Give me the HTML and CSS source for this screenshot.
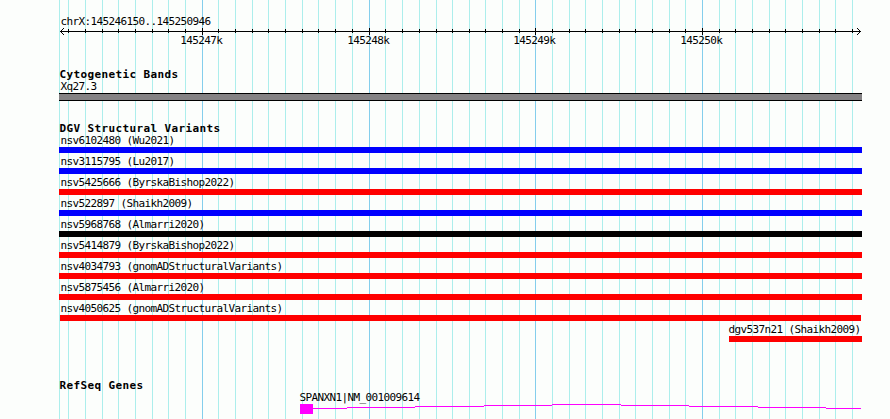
FILE: index.html
```html
<!DOCTYPE html>
<html lang="en">
<head>
<meta charset="utf-8">
<title>chrX:145246150..145250946</title>
<link rel="stylesheet" href="styles.css">
</head>
<body>
<main class="browser">
  <svg class="grid" width="890" height="419" shape-rendering="crispEdges" aria-hidden="true">
    <path class="minor" d="M59.5 0V419M68.5 0V419M85.5 0V419M102.5 0V419M118.5 0V419M135.5 0V419M152.5 0V419M168.5 0V419M185.5 0V419M218.5 0V419M235.5 0V419M252.5 0V419M268.5 0V419M285.5 0V419M302.5 0V419M318.5 0V419M335.5 0V419M352.5 0V419M385.5 0V419M402.5 0V419M419.5 0V419M436.5 0V419M452.5 0V419M469.5 0V419M485.5 0V419M502.5 0V419M519.5 0V419M552.5 0V419M569.5 0V419M585.5 0V419M602.5 0V419M619.5 0V419M635.5 0V419M652.5 0V419M669.5 0V419M685.5 0V419M719.5 0V419M735.5 0V419M752.5 0V419M769.5 0V419M785.5 0V419M802.5 0V419M819.5 0V419M835.5 0V419M852.5 0V419"/>
    <path class="major" d="M202.5 0V419M369.5 0V419M535.5 0V419M702.5 0V419"/>
  </svg>

  <section class="ruler">
    <div class="label">chrX:145246150..145250946</div>
    <svg class="axis" width="803" height="7" viewBox="59 28 803 7" shape-rendering="crispEdges" aria-hidden="true">
      <path d="M60 31.5H861"/>
      <path d="M68.5 29V33M85.5 29V33M102.5 29V33M118.5 29V33M135.5 29V33M152.5 29V33M168.5 29V33M185.5 29V33M218.5 29V33M235.5 29V33M252.5 29V33M268.5 29V33M285.5 29V33M302.5 29V33M318.5 29V33M335.5 29V33M352.5 29V33M385.5 29V33M402.5 29V33M419.5 29V33M436.5 29V33M452.5 29V33M469.5 29V33M485.5 29V33M502.5 29V33M519.5 29V33M552.5 29V33M569.5 29V33M585.5 29V33M602.5 29V33M619.5 29V33M635.5 29V33M652.5 29V33M669.5 29V33M685.5 29V33M719.5 29V33M735.5 29V33M752.5 29V33M769.5 29V33M785.5 29V33M802.5 29V33M819.5 29V33M835.5 29V33M852.5 29V33"/>
      <path d="M202.5 28V35M369.5 28V35M535.5 28V35M702.5 28V35"/>
      <path d="M61 30.5h1M62 29.5h1M63 28.5h1M61 32.5h1M62 33.5h1M63 34.5h1M859 30.5h1M858 29.5h1M857 28.5h1M859 32.5h1M858 33.5h1M857 34.5h1"/>
    </svg>
    <div class="scale">
      <span>145247k</span><span>145248k</span><span>145249k</span><span>145250k</span>
    </div>
  </section>

  <section class="track bands">
    <h2>Cytogenetic Bands</h2>
    <div class="label">Xq27.3</div>
    <div class="band"></div>
  </section>

  <section class="track variants">
    <h2>DGV Structural Variants</h2>
    <div class="variant gain"><div class="label">nsv6102480 (Wu2021)</div><div class="bar"></div></div>
    <div class="variant gain"><div class="label">nsv3115795 (Lu2017)</div><div class="bar"></div></div>
    <div class="variant loss"><div class="label">nsv5425666 (ByrskaBishop2022)</div><div class="bar"></div></div>
    <div class="variant gain"><div class="label">nsv522897 (Shaikh2009)</div><div class="bar"></div></div>
    <div class="variant other"><div class="label">nsv5968768 (Almarri2020)</div><div class="bar"></div></div>
    <div class="variant loss"><div class="label">nsv5414879 (ByrskaBishop2022)</div><div class="bar"></div></div>
    <div class="variant loss"><div class="label">nsv4034793 (gnomADStructuralVariants)</div><div class="bar"></div></div>
    <div class="variant loss"><div class="label">nsv5875456 (Almarri2020)</div><div class="bar"></div></div>
    <div class="variant loss inset"><div class="label">nsv4050625 (gnomADStructuralVariants)</div><div class="bar"></div></div>
    <div class="variant loss partial"><div class="label">dgv537n21 (Shaikh2009)</div><div class="bar"></div></div>
  </section>

  <section class="track genes">
    <h2>RefSeq Genes</h2>
    <div class="gene">
      <div class="label">SPANXN1|NM_001009614</div>
      <svg width="562" height="10" viewBox="300 404 562 10" shape-rendering="crispEdges" aria-hidden="true">
        <rect class="exon" x="300" y="404" width="13" height="10"/>
        <path class="intron" d="M313 408.5H347M347 407.5H415M415 406.5H484M484 405.5H552M552 404.5H621M621 405.5H689M689 406.5H758M758 407.5H826M826 408.5H861"/>
      </svg>
    </div>
  </section>
</main>
</body>
</html>
```
FILE: styles.css
```css
body {
  margin: 0;
  background: #fcfefc;
  color: #000;
  font: 11px/13px "DejaVu Sans Mono", monospace;
  letter-spacing: -0.622px;
}

.browser {
  position: relative;
  box-sizing: border-box;
  width: 890px;
  height: 419px;
  padding: 15px 28px 0 59px;
  overflow: hidden;
}

.grid {
  position: absolute;
  inset: 0;
  z-index: -1;
}

svg {
  display: block;
}

path {
  fill: none;
  stroke: #000;
}

.grid .minor { stroke: #aceeec; }
.grid .major { stroke: #84ceec; }

.label {
  height: 13px;
  padding-left: 1.4px;
  white-space: nowrap;
}

.scale {
  display: grid;
  grid-template-columns: 167px 166px 167px 42px;
  height: 13px;
  margin-top: -1px;
  padding-left: 121.3px;
}

h2 {
  height: 12px;
  margin: 0;
  padding-left: 0.5px;
  font: bold 11px/13px "DejaVu Sans Mono", monospace;
  letter-spacing: 0.378px;
  white-space: nowrap;
}

.bands { margin-top: 21px; }
.variants { margin-top: 21px; }
.genes { margin-top: 37px; }

.band {
  box-sizing: border-box;
  height: 8px;
  background: #848284;
  border: solid #000;
  border-width: 1px 0;
}

.variant + .variant { margin-top: 2px; }

.bar { height: 6px; }
.gain .bar { background: #00f; }
.loss .bar { background: #f00; }
.other .bar { background: #000; }
.inset .bar { margin: 0 1px; }

.partial { margin-left: 670px; }
.partial .label { margin-left: -2px; }

.gene { margin-left: 241px; }
.gene .label { margin-left: -2px; }

.exon { fill: #f0f; }
.intron { stroke: #f0f; }
```
